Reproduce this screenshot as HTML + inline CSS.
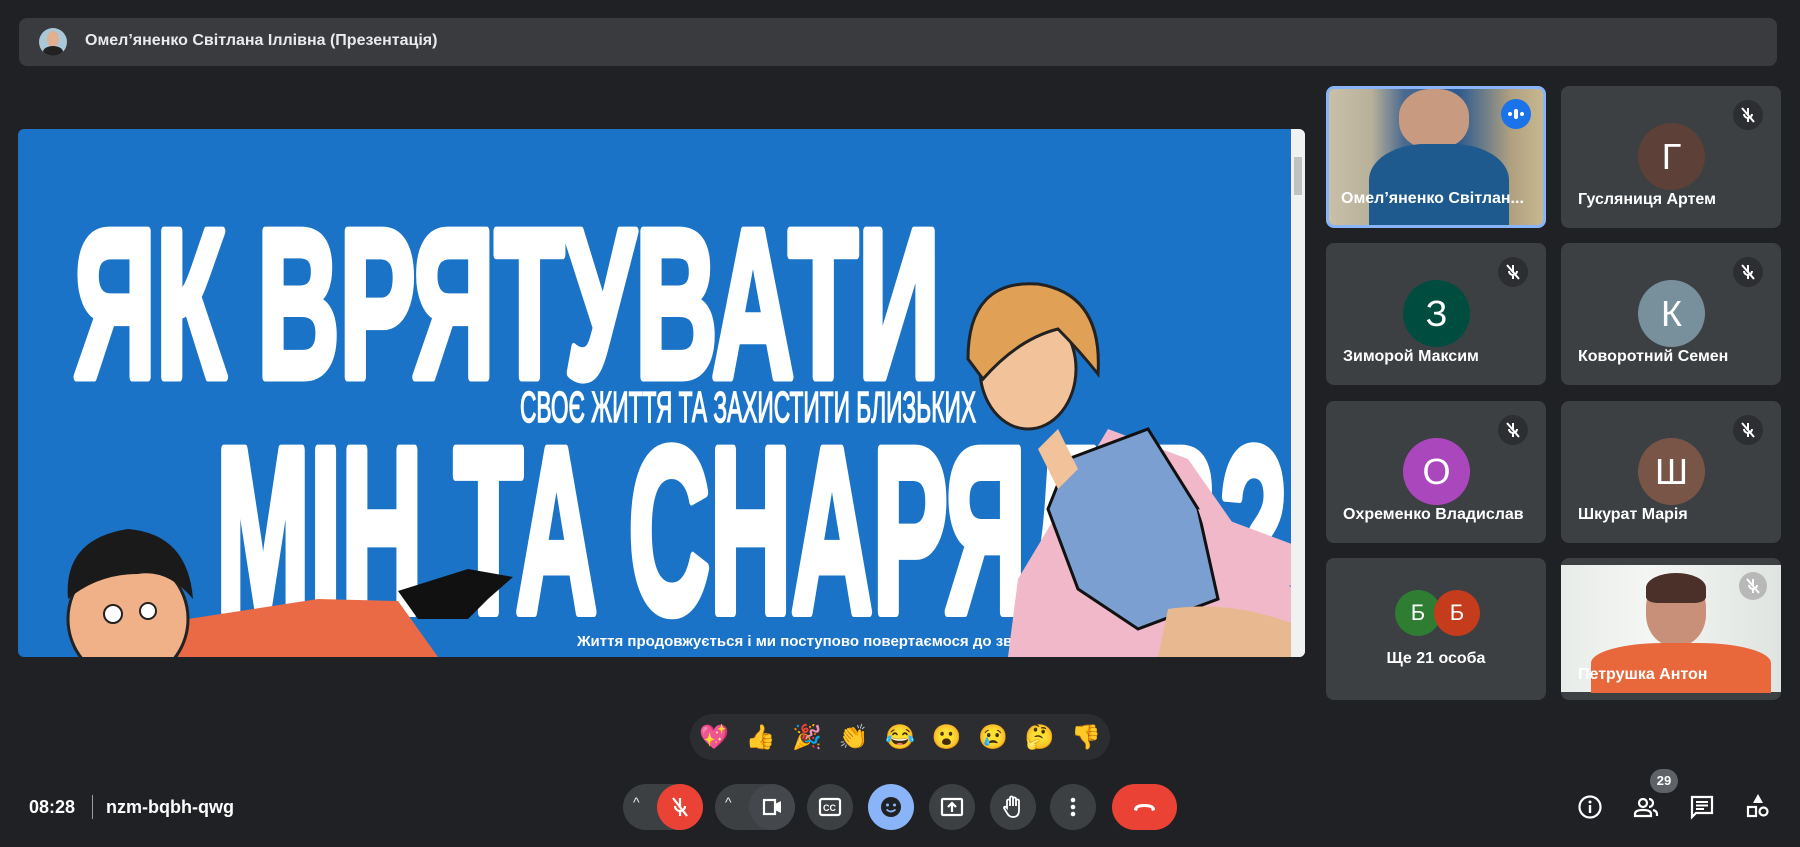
<!DOCTYPE html>
<html><head><meta charset="utf-8"><style>
*{margin:0;padding:0;box-sizing:border-box}
body{width:1800px;height:847px;background:#202124;font-family:"Liberation Sans",sans-serif;color:#e8eaed;position:relative;overflow:hidden}
.abs{position:absolute}
.top{left:19px;top:18px;width:1758px;height:48px;background:#3a3b3e;border-radius:8px}
.tile{position:absolute;width:220px;height:142px;background:#3c4043;border-radius:8px;overflow:hidden}
.av{position:absolute;left:77px;top:37px;width:67px;height:67px;border-radius:50%;color:#fff;font-size:36px;text-align:center;line-height:67px}
.nm{position:absolute;left:17px;top:105px;font-size:16px;font-weight:bold;color:#fff;white-space:nowrap}
.mute{position:absolute;right:18px;top:14px;width:30px;height:30px;border-radius:50%;background:#2d2e31}
.btn{position:absolute;top:784px;width:46px;height:46px;border-radius:50%;background:#3c4043}
.em{display:inline-block;width:46.5px;text-align:center}
</style></head><body>
<div class="abs top">
 <div class="abs" style="left:20px;top:10px;width:28px;height:28px;border-radius:50%;background:#a9c8d8;overflow:hidden"><div style="position:absolute;left:8px;top:3px;width:12px;height:16px;border-radius:50%;background:#e0b090"></div><div style="position:absolute;left:4px;top:18px;width:20px;height:12px;border-radius:50%;background:#222"></div></div>
 <div class="abs" style="left:66px;top:14px;font-size:16px;font-weight:bold;color:#e8eaed">Омел’яненко Світлана Іллівна (Презентація)</div>
</div>

<div class="abs" style="left:18px;top:129px;width:1287px;height:528px;border-radius:6px;overflow:hidden;background:#1a73c6">
<svg width="1287" height="528" viewBox="0 0 1287 528" xmlns="http://www.w3.org/2000/svg">
 <text x="56" y="248" font-family="Liberation Sans" font-weight="bold" font-size="212" fill="#fff" stroke="#fff" stroke-width="9" stroke-linejoin="round" textLength="866" lengthAdjust="spacingAndGlyphs">ЯК ВРЯТУВАТИ</text>
 <text x="502" y="293" font-family="Liberation Sans" font-size="44" fill="#fff" stroke="#fff" stroke-width="1.5" textLength="456" lengthAdjust="spacingAndGlyphs">СВОЄ ЖИТТЯ ТА ЗАХИСТИТИ БЛИЗЬКИХ</text>
 <text x="198" y="483" font-family="Liberation Sans" font-weight="bold" font-size="236" fill="#fff" stroke="#fff" stroke-width="10" stroke-linejoin="round" textLength="1072" lengthAdjust="spacingAndGlyphs">МІН ТА СНАРЯДІВ?</text>
 <text x="559" y="517" font-family="Liberation Sans" font-weight="bold" font-size="15" fill="#fff">Життя продовжується і ми поступово повертаємося до звичного життя та</text>
 <path d="M1000 450 L1090 300 L1170 330 L1240 430 L1287 470 L1287 528 L990 528 Z" fill="#f0b8c8"/>
 <path d="M1050 330 L1130 300 L1180 380 L1200 470 L1120 500 L1060 460 L1030 380 Z" fill="#7b9fd0" stroke="#111" stroke-width="3"/>
 <path d="M1180 380 L1287 420 L1287 460 L1200 440 Z" fill="#f0b8c8"/>
 <ellipse cx="1010" cy="240" rx="48" ry="60" fill="#f2c29a" stroke="#222" stroke-width="3"/>
 <path d="M950 230 Q950 150 1020 155 Q1085 165 1080 245 Q1060 220 1040 200 Q1000 210 965 250 Z" fill="#e0a055" stroke="#222" stroke-width="3"/>
 <path d="M1040 300 L1060 340 L1040 360 L1020 320Z" fill="#f2c29a"/>
 <path d="M1150 480 Q1220 470 1287 500 L1287 528 L1140 528Z" fill="#e8b890"/>
 <path d="M160 528 L170 490 L300 470 L380 472 L400 500 L420 528Z" fill="#ea6a45"/>
 <path d="M380 462 L450 440 L495 448 L470 470 L450 490 L400 490Z" fill="#111"/>
 <ellipse cx="110" cy="490" rx="60" ry="62" fill="#f0b088" stroke="#222" stroke-width="3"/>
 <path d="M50 470 Q45 410 110 400 Q170 405 175 470 Q150 440 120 445 Q80 445 50 470Z" fill="#1a1a1a"/>
 <circle cx="95" cy="485" r="9" fill="#fff" stroke="#222" stroke-width="2"/><circle cx="130" cy="482" r="8" fill="#fff" stroke="#222" stroke-width="2"/>
 <rect x="1273" y="0" width="14" height="528" fill="#f1f1f1"/>
 <rect x="1276" y="28" width="8" height="38" fill="#c1c1c1"/>
</svg>
</div>

<div class="tile" style="left:1326px;top:86px;border:3px solid #8ab4f8;background:linear-gradient(90deg,#c8c0a8 0%,#b8b098 20%,#4a6a90 35%,#2a5a90 60%,#b0a080 85%,#c8b890 100%)">
 <div class="abs" style="left:70px;top:0;width:70px;height:60px;border-radius:45%;background:#c89a80"></div>
 <div class="abs" style="left:40px;top:55px;width:140px;height:90px;border-radius:40% 40% 0 0;background:#1f5a8f"></div>
 <div class="abs" style="right:12px;top:10px;width:30px;height:30px;border-radius:50%;background:#1a73e8"><svg width="30" height="30"><circle cx="9" cy="15" r="2" fill="#fff"/><rect x="13" y="10" width="4" height="10" rx="2" fill="#fff"/><circle cx="21" cy="15" r="2" fill="#fff"/></svg></div>
 <div class="nm" style="left:12px;top:101px">Омел’яненко Світлан...</div>
</div>
<div class="tile" style="left:1561px;top:86px"><div class="mute"><svg width="30" height="30"><path d="M15 8v7M11 14a4 4 0 0 0 8 0M15 18v4M9 8l12 14" stroke="#fff" stroke-width="2" fill="none"/></svg></div><div class="av" style="background:#5d4037">Г</div><div class="nm">Гусляниця Артем</div></div>
<div class="tile" style="left:1326px;top:243px"><div class="mute"><svg width="30" height="30"><path d="M15 8v7M11 14a4 4 0 0 0 8 0M15 18v4M9 8l12 14" stroke="#fff" stroke-width="2" fill="none"/></svg></div><div class="av" style="background:#004d40">З</div><div class="nm">Зиморой Максим</div></div>
<div class="tile" style="left:1561px;top:243px"><div class="mute"><svg width="30" height="30"><path d="M15 8v7M11 14a4 4 0 0 0 8 0M15 18v4M9 8l12 14" stroke="#fff" stroke-width="2" fill="none"/></svg></div><div class="av" style="background:#78909c">К</div><div class="nm">Коворотний Семен</div></div>
<div class="tile" style="left:1326px;top:401px"><div class="mute"><svg width="30" height="30"><path d="M15 8v7M11 14a4 4 0 0 0 8 0M15 18v4M9 8l12 14" stroke="#fff" stroke-width="2" fill="none"/></svg></div><div class="av" style="background:#ab47bc">О</div><div class="nm">Охременко Владислав</div></div>
<div class="tile" style="left:1561px;top:401px"><div class="mute"><svg width="30" height="30"><path d="M15 8v7M11 14a4 4 0 0 0 8 0M15 18v4M9 8l12 14" stroke="#fff" stroke-width="2" fill="none"/></svg></div><div class="av" style="background:#795548">Ш</div><div class="nm">Шкурат Марія</div></div>
<div class="tile" style="left:1326px;top:558px">
 <div class="abs" style="left:69px;top:32px;width:46px;height:46px;border-radius:50%;background:#2e7d32;color:#fff;font-size:22px;text-align:center;line-height:46px">Б</div>
 <div class="abs" style="left:108px;top:32px;width:46px;height:46px;border-radius:50%;background:#c43c1c;color:#fff;font-size:22px;text-align:center;line-height:46px">Б</div>
 <div class="abs" style="left:0;width:220px;top:92px;text-align:center;font-size:16px;font-weight:bold;color:#fff">Ще 21 особа</div>
</div>
<div class="tile" style="left:1561px;top:558px;background:#3c4043">
 <div class="abs" style="left:0;top:7px;width:221px;height:127px;background:linear-gradient(90deg,#e8ece8,#f4f6f4 40%,#dfe4e0)"></div>
 <div class="abs" style="left:85px;top:18px;width:60px;height:70px;border-radius:45%;background:#c89078"></div>
 <div class="abs" style="left:85px;top:15px;width:60px;height:30px;border-radius:50% 50% 20% 20%;background:#4a3028"></div>
 <div class="abs" style="left:30px;top:85px;width:180px;height:50px;border-radius:40% 40% 0 0;background:#e8683c"></div>
 <div class="abs" style="right:14px;top:14px;width:28px;height:28px;border-radius:50%;background:#b8b8b8"><svg width="28" height="28"><path d="M14 7v7M10 13a4 4 0 0 0 8 0M14 17v4M8 7l12 14" stroke="#fff" stroke-width="2" fill="none"/></svg></div>
 <div class="nm" style="top:108px">Петрушка Антон</div>
</div>

<div class="abs" style="left:690px;top:714px;width:420px;height:46px;border-radius:23px;background:#2c2d30;font-size:24px;line-height:46px;padding-left:1px;white-space:nowrap;font-family:'Noto Color Emoji','DejaVu Sans',sans-serif">
<span class="em">💖</span><span class="em">👍</span><span class="em">🎉</span><span class="em">👏</span><span class="em">😂</span><span class="em">😮</span><span class="em">😢</span><span class="em">🤔</span><span class="em">👎</span>
</div>

<div class="abs" style="left:29px;top:797px;font-size:18px;font-weight:bold;color:#fff">08:28</div>
<div class="abs" style="left:92px;top:795px;width:1px;height:24px;background:#9aa0a6"></div>
<div class="abs" style="left:106px;top:797px;font-size:18px;font-weight:bold;color:#fff">nzm-bqbh-qwg</div>

<div class="abs" style="left:623px;top:784px;width:80px;height:46px;border-radius:23px;background:#3c4043"></div>
<div class="abs" style="left:633px;top:794px;font-size:14px;color:#e8eaed">^</div>
<div class="btn" style="left:657px;background:#ea4335"><svg width="46" height="46"><path d="M23 14v10M18 22a5 5 0 0 0 10 0M23 28v4M16 14l14 18" stroke="#fff" stroke-width="2.2" fill="none"/></svg></div>
<div class="abs" style="left:715px;top:784px;width:80px;height:46px;border-radius:23px;background:#3c4043"></div>
<div class="abs" style="left:725px;top:794px;font-size:14px;color:#e8eaed">^</div>
<div class="btn" style="left:749px;background:#44474b"><svg width="46" height="46"><rect x="15" y="16" width="11" height="14" fill="none" stroke="#fff" stroke-width="2.2"/><path d="M26 20l6-3v12l-6-3z" fill="#fff"/></svg></div>
<div class="btn" style="left:807px"><svg width="46" height="46"><rect x="13" y="15" width="20" height="16" rx="2" fill="none" stroke="#fff" stroke-width="2.2"/><text x="16" y="27" font-size="9" font-weight="bold" fill="#fff" font-family="Liberation Sans">CC</text></svg></div>
<div class="btn" style="left:868px;background:#8ab4f8"><svg width="46" height="46"><circle cx="23" cy="23" r="10" fill="#202124"/><circle cx="19.5" cy="21" r="1.5" fill="#8ab4f8"/><circle cx="26.5" cy="21" r="1.5" fill="#8ab4f8"/><path d="M18.5 25.5q4.5 4 9 0" stroke="#8ab4f8" stroke-width="1.8" fill="none"/></svg></div>
<div class="btn" style="left:929px"><svg width="46" height="46"><rect x="13" y="15" width="20" height="16" rx="1" fill="none" stroke="#fff" stroke-width="2.2"/><path d="M23 28v-8M19 23l4-4 4 4" stroke="#fff" stroke-width="2.2" fill="none"/></svg></div>
<div class="btn" style="left:990px"><svg width="46" height="46"><path d="M17 24v-7a1.5 1.5 0 0 1 3 0v5v-8a1.5 1.5 0 0 1 3 0v8v-7a1.5 1.5 0 0 1 3 0v7v-5a1.5 1.5 0 0 1 3 0v9q0 7-6 7q-4 0-6-4l-3-5q0-2 2-1z" fill="none" stroke="#fff" stroke-width="1.8"/></svg></div>
<div class="btn" style="left:1050px"><svg width="46" height="46"><circle cx="23" cy="16" r="2.3" fill="#fff"/><circle cx="23" cy="23" r="2.3" fill="#fff"/><circle cx="23" cy="30" r="2.3" fill="#fff"/></svg></div>
<div class="abs" style="left:1112px;top:784px;width:65px;height:46px;border-radius:23px;background:#ea4335"><svg width="65" height="46"><path d="M22 26q0-6 10.5-6t10.5 6l-3 1-1-3q-6.5-2-13 0l-1 3z" fill="#fff"/></svg></div>

<svg class="abs" style="left:1576px;top:793px" width="28" height="28"><circle cx="14" cy="14" r="10.5" fill="none" stroke="#fff" stroke-width="2.2"/><rect x="12.8" y="12" width="2.4" height="8" fill="#fff"/><circle cx="14" cy="9" r="1.5" fill="#fff"/></svg>
<div class="abs" style="left:1650px;top:769px;width:28px;height:24px;border-radius:12px;background:#5f6368;font-size:13px;font-weight:bold;text-align:center;line-height:24px;color:#fff">29</div>
<svg class="abs" style="left:1632px;top:793px" width="28" height="28"><circle cx="11" cy="10" r="4" fill="none" stroke="#fff" stroke-width="2.2"/><path d="M3 23v-2q0-4 8-4t8 4v2z" fill="none" stroke="#fff" stroke-width="2.2"/><path d="M17 6a4 4 0 0 1 0 8M21 17q4 1 4 4v2" fill="none" stroke="#fff" stroke-width="2.2"/></svg>
<svg class="abs" style="left:1688px;top:793px" width="28" height="28"><path d="M4 4h20v16H8l-4 4z" fill="none" stroke="#fff" stroke-width="2.2"/><path d="M8 9h12M8 12.5h12M8 16h8" stroke="#fff" stroke-width="2"/></svg>
<svg class="abs" style="left:1744px;top:791px" width="28" height="30"><path d="M14 3l5 9H9z" fill="#fff"/><rect x="4" y="16" width="8" height="9" fill="none" stroke="#fff" stroke-width="2.2"/><circle cx="19.5" cy="20.5" r="4" fill="none" stroke="#fff" stroke-width="2.2"/></svg>
</body></html>
